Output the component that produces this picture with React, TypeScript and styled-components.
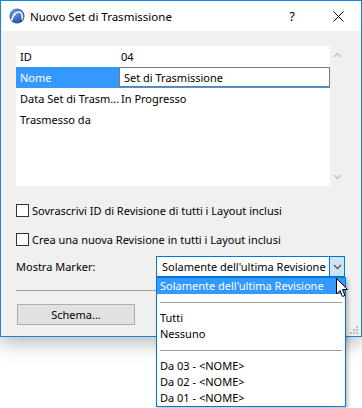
import { FC } from 'react';
import styled, { createGlobalStyle } from 'styled-components';

const GlobalStyle = createGlobalStyle`
  body {
    margin: 0;
    background: #ffffff;
    font-family: 'Noto Sans', 'DejaVu Sans', sans-serif;
    font-size: 11px;
    color: #000000;
  }
`;

const Page = styled.div`
  height: 408px;
  position: relative;
`;

const Window = styled.div`
  position: relative;
  width: 362px;
  height: 337px;
  box-sizing: border-box;
  border: 1px solid #1883d7;
  background: #f0f0f0;
  box-shadow: 0 6px 18px rgba(0, 0, 0, 0.28);
  display: flex;
  flex-direction: column;
`;

const TitleBar = styled.div`
  height: 30px;
  background: #ffffff;
  display: flex;
  align-items: center;
  padding-left: 8px;
`;

const Title = styled.span`
  margin-left: 5px;
  font-size: 11.5px;
  flex: 1;
`;

const TitleButton = styled.span`
  width: 46px;
  display: flex;
  justify-content: center;
  align-items: center;
  font-size: 13px;
`;

const Client = styled.div`
  flex: 1;
  padding: 15px 15px 0 15px;
  display: flex;
  flex-direction: column;
`;

const Panel = styled.div`
  display: flex;
  height: 140px;
`;

const Table = styled.div`
  width: 314px;
  background: #ffffff;
`;

const Scrollbar = styled.div`
  width: 15px;
  display: flex;
  flex-direction: column;
  justify-content: space-between;
  align-items: center;
  padding: 6px 0 6px;
`;

const Row = styled.div<{ $selected?: boolean }>`
  display: grid;
  grid-template-columns: 103px 1fr;
  height: 21px;
  align-items: center;
  background: ${({ $selected }) => ($selected ? '#3399ff' : 'transparent')};
  color: ${({ $selected }) => ($selected ? '#ffffff' : '#000000')};
`;

const Cell = styled.span`
  padding-left: 4px;
  white-space: nowrap;
  overflow: hidden;
`;

const ValueCell = styled.span`
  padding-left: 2px;
  white-space: nowrap;
`;

const EditBox = styled.div`
  align-self: start;
  height: 20px;
  box-sizing: border-box;
  border: 1px solid #7a7a7a;
  background: #ffffff;
  color: #000000;
  padding-left: 4px;
  display: flex;
  align-items: center;
`;

const CheckRow = styled.label<{ $top: number }>`
  display: flex;
  align-items: center;
  height: 13px;
  margin-top: ${({ $top }) => $top}px;
  white-space: nowrap;
`;

const CheckBox = styled.span`
  width: 13px;
  height: 13px;
  box-sizing: border-box;
  border: 1px solid #333333;
  background: #ffffff;
  margin-right: 3px;
`;

const MarkerRow = styled.div`
  display: flex;
  align-items: center;
  margin-top: 10px;
  height: 21px;
`;

const MarkerLabel = styled.span`
  width: 140px;
`;

const Combo = styled.div`
  width: 189px;
  height: 21px;
  box-sizing: border-box;
  border: 1px solid #0078d7;
  background: #ffffff;
  display: flex;
  align-items: center;
`;

const ComboText = styled.span`
  flex: 1;
  padding-left: 5px;
  white-space: nowrap;
  overflow: hidden;
`;

const ComboArrow = styled.span`
  width: 14px;
  height: 100%;
  background: #cce4f7;
  border-left: 1px solid #0078d7;
  display: flex;
  align-items: center;
  justify-content: center;
`;

const Separator = styled.div`
  height: 1px;
  background: #a0a0a0;
  margin-top: 13px;
`;

const Button = styled.button`
  margin: 13px 0 0 1px;
  width: 118px;
  height: 21px;
  border: 1px solid #adadad;
  background: #e1e1e1;
  font: inherit;
  color: #000000;
  padding: 0;
`;

const DropList = styled.div`
  position: absolute;
  left: 156px;
  top: 277px;
  width: 190px;
  box-sizing: border-box;
  border: 1px solid #0078d7;
  background: #ffffff;
  box-shadow: 2px 2px 4px rgba(0, 0, 0, 0.25);
`;

const Item = styled.div<{ $active?: boolean }>`
  height: 16px;
  line-height: 16px;
  padding-left: 3px;
  white-space: nowrap;
  background: ${({ $active }) => ($active ? '#3399ff' : 'transparent')};
  color: ${({ $active }) => ($active ? '#ffffff' : '#000000')};
`;

const ItemSeparator = styled.div`
  height: 16px;
  display: flex;
  align-items: center;
  padding: 0 3px;

  &::after {
    content: '';
    flex: 1;
    height: 1px;
    background: #a0a0a0;
  }
`;

const Grip = styled.svg`
  position: absolute;
  right: 2px;
  bottom: 1px;
`;

const Cursor = styled.svg`
  position: absolute;
  left: 336px;
  top: 278px;
`;

const Logo: FC = () => (
  <svg width="16" height="16" viewBox="0 0 16 16">
    <defs>
      <radialGradient id="lg" cx="0.35" cy="0.3" r="0.8">
        <stop offset="0" stopColor="#6a9be6" />
        <stop offset="1" stopColor="#1d4a9c" />
      </radialGradient>
    </defs>
    <circle cx="8" cy="8" r="7.6" fill="url(#lg)" />
    <path d="M2.5 12.5 C4 6 8 3.2 11 4.2 C13 5 13.6 8 13.2 11.5" stroke="#ffffff" strokeWidth="1.6" fill="none" />
  </svg>
);

const Chevron: FC<{ up?: boolean; color: string }> = ({ up, color }) => (
  <svg width="9" height="6" viewBox="0 0 9 6">
    <path d={up ? 'M1 5 L4.5 1.5 L8 5' : 'M1 1 L4.5 4.5 L8 1'} stroke={color} strokeWidth="1.3" fill="none" />
  </svg>
);

export default function App() {
  return (
    <Page>
      <GlobalStyle />
      <Window>
        <TitleBar>
          <Logo />
          <Title>Nuovo Set di Trasmissione</Title>
          <TitleButton>?</TitleButton>
          <TitleButton>
            <svg width="11" height="11" viewBox="0 0 11 11">
              <path d="M0.5 0.5 L10.5 10.5 M10.5 0.5 L0.5 10.5" stroke="#000" strokeWidth="1" />
            </svg>
          </TitleButton>
        </TitleBar>
        <Client>
          <Panel>
            <Table>
              <Row>
                <Cell>ID</Cell>
                <ValueCell>04</ValueCell>
              </Row>
              <Row $selected>
                <Cell>Nome</Cell>
                <EditBox>Set di Trasmissione</EditBox>
              </Row>
              <Row>
                <Cell>Data Set di Trasm...</Cell>
                <ValueCell>In Progresso</ValueCell>
              </Row>
              <Row>
                <Cell>Trasmesso da</Cell>
                <ValueCell />
              </Row>
            </Table>
            <Scrollbar>
              <Chevron up color="#c2c2c2" />
              <Chevron color="#c2c2c2" />
            </Scrollbar>
          </Panel>
          <CheckRow $top={18}>
            <CheckBox />
            Sovrascrivi ID di Revisione di tutti i Layout inclusi
          </CheckRow>
          <CheckRow $top={16}>
            <CheckBox />
            Crea una nuova Revisione in tutti i Layout inclusi
          </CheckRow>
          <MarkerRow>
            <MarkerLabel>Mostra Marker:</MarkerLabel>
            <Combo>
              <ComboText>Solamente dell'ultima Revisione</ComboText>
              <ComboArrow>
                <Chevron color="#555555" />
              </ComboArrow>
            </Combo>
          </MarkerRow>
          <Separator />
          <Button>Schema...</Button>
        </Client>
        <Grip width="9" height="9" viewBox="0 0 9 9">
          <g fill="#bdbdbd">
            <rect x="6" y="0" width="2" height="2" />
            <rect x="3" y="3" width="2" height="2" />
            <rect x="6" y="3" width="2" height="2" />
            <rect x="0" y="6" width="2" height="2" />
            <rect x="3" y="6" width="2" height="2" />
            <rect x="6" y="6" width="2" height="2" />
          </g>
        </Grip>
      </Window>
      <DropList>
        <Item $active>Solamente dell'ultima Revisione</Item>
        <ItemSeparator />
        <Item>Tutti</Item>
        <Item>Nessuno</Item>
        <ItemSeparator />
        <Item>Da 03 - &lt;NOME&gt;</Item>
        <Item>Da 02 - &lt;NOME&gt;</Item>
        <Item>Da 01 - &lt;NOME&gt;</Item>
      </DropList>
      <Cursor width="13" height="20" viewBox="0 0 13 20">
        <path d="M0.5 0.5 L0.5 16 L4 12.5 L6.5 18.5 L9 17.5 L6.5 11.5 L11.5 11.5 Z" fill="#ffffff" stroke="#000000" strokeWidth="1" strokeLinejoin="miter" />
      </Cursor>
    </Page>
  );
}
